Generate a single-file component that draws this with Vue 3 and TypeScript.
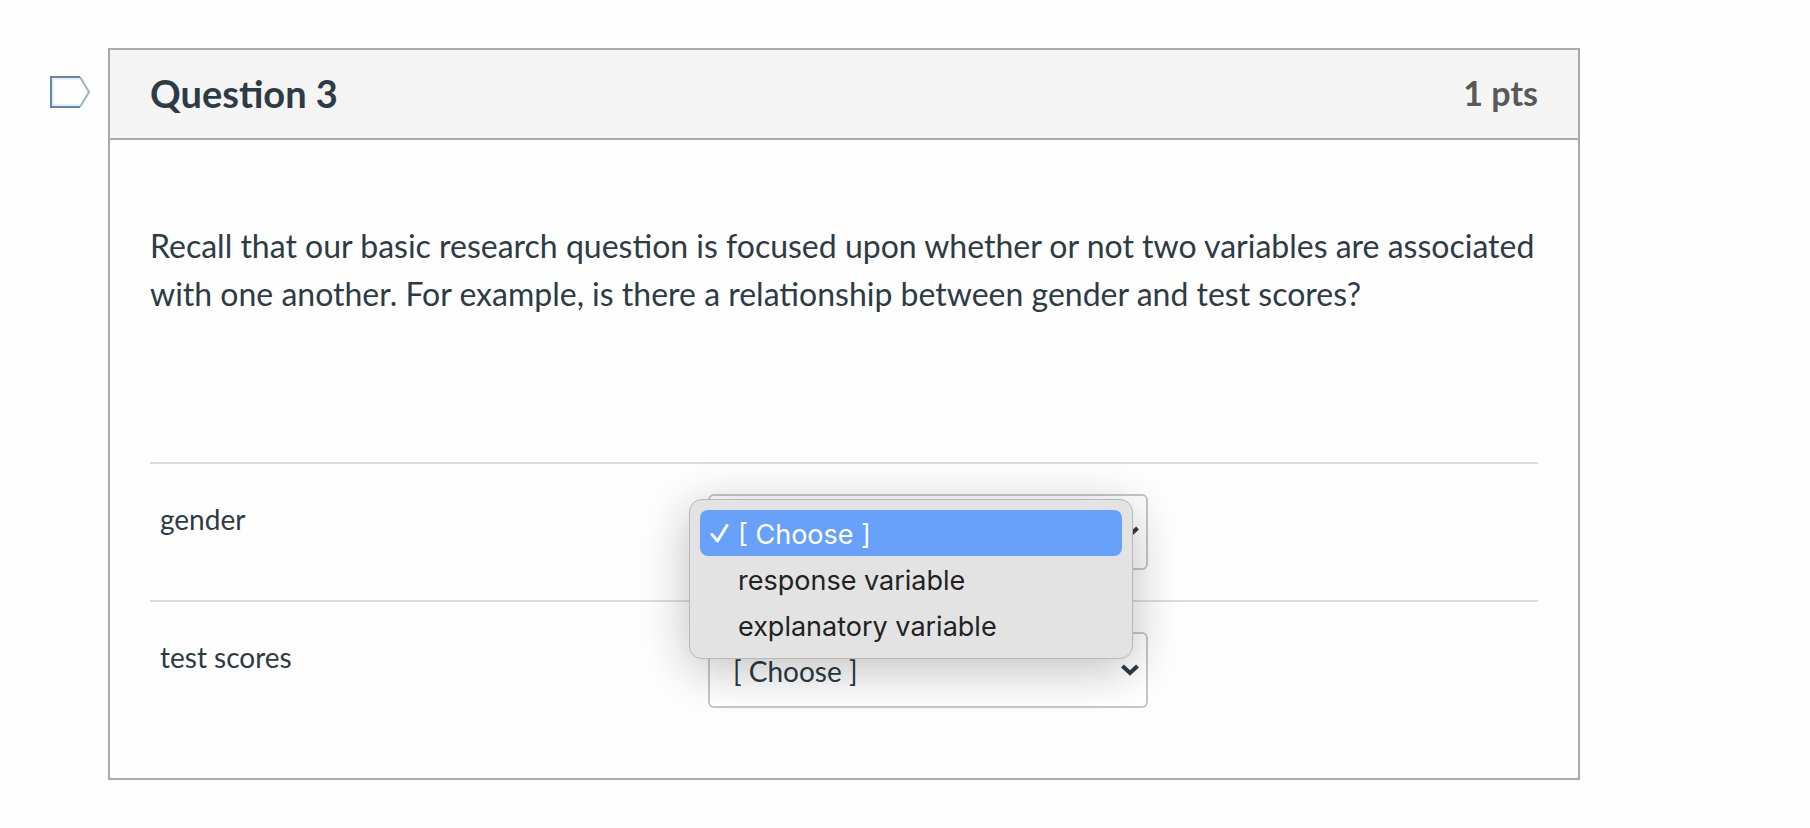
<script setup lang="ts">
import { ref } from 'vue'

interface Row {
  id: string
  label: string
}

const rows: Row[] = [
  { id: 'gender', label: 'gender' },
  { id: 'test-scores', label: 'test scores' },
]
const choices: string[] = ['[ Choose ]', 'response variable', 'explanatory variable']

const answers = ref<Record<string, string>>({ gender: choices[0], 'test-scores': choices[0] })
const openRow = ref<string | null>('gender')
const flagged = ref(false)

function pick(id: string, choice: string): void {
  answers.value[id] = choice
  openRow.value = null
}
</script>

<template>
  <main class="page">
    <button
      class="flag"
      type="button"
      aria-label="Flag question"
      :aria-pressed="flagged"
      @click="flagged = !flagged"
    >
      <svg width="40" height="32" viewBox="0 0 40 32" fill="none">
        <path d="M30 1 L39 16 L30 31" stroke="#9db3c4" stroke-width="2" />
        <path d="M30 1 H1 V31 H30" stroke="#6488a3" stroke-width="2" />
        <path d="M30 3 H3 V29 H30" stroke="#d3dee6" stroke-width="1" />
      </svg>
    </button>

    <section class="card">
      <header class="head">
        <h2 class="title">Question 3</h2>
        <span class="points">1 pts</span>
      </header>

      <div class="body">
        <p class="prompt">
          Recall that our basic research question is focused upon whether or not two variables are
          associated with one another. For example, is there a relationship between gender and test
          scores?
        </p>

        <div v-for="row in rows" :key="row.id" class="row">
          <label class="label" :for="row.id">{{ row.label }}</label>
          <div class="field">
            <select :id="row.id" v-model="answers[row.id]" class="select">
              <option v-for="choice in choices" :key="choice" :value="choice">{{ choice }}</option>
            </select>
            <svg class="chevron" width="18" height="12" viewBox="0 0 18 12" fill="none">
              <path d="M1.500 2 L9 9 L16.500 2" stroke="#2d3b45" stroke-width="4" />
            </svg>

            <div v-if="openRow === row.id" class="menu" role="listbox" :aria-label="row.label">
              <button
                v-for="choice in choices"
                :key="choice"
                type="button"
                role="option"
                class="option"
                :class="{ active: answers[row.id] === choice }"
                :aria-selected="answers[row.id] === choice"
                @click="pick(row.id, choice)"
              >
                <span class="mark">
                  <svg
                    v-if="answers[row.id] === choice"
                    width="20"
                    height="20"
                    viewBox="0 0 20 20"
                    fill="none"
                  >
                    <path
                      d="M3 10.500 L8.500 17 L18 1.500"
                      stroke="#ffffff"
                      stroke-width="3"
                      stroke-linecap="round"
                      stroke-linejoin="round"
                    />
                  </svg>
                </span>
                {{ choice }}
              </button>
            </div>
          </div>
        </div>
      </div>
    </section>
  </main>
</template>

<style>
body {
  margin: 0;
  background: #fefefe;
}
</style>

<style scoped>
.page {
  display: flex;
  align-items: flex-start;
  gap: 18px;
  padding: 48px 230px 48px 50px;
  font-family: Lato, 'Liberation Sans', sans-serif;
  color: #2d3b45;
}

.flag {
  flex: none;
  margin: 28px 0 0;
  padding: 0;
  border: 0;
  background: none;
  cursor: pointer;
}

.flag svg {
  display: block;
}

.card {
  flex: 1;
  min-width: 0;
  border: 2px solid #aaaaaa;
}

.head {
  display: flex;
  align-items: center;
  justify-content: space-between;
  padding: 19px 40px 21px;
  border-bottom: 2px solid #aaaaaa;
  background: #f5f5f5;
}

.title {
  margin: 0;
  font-size: 38px;
  line-height: 48px;
  font-weight: 700;
}

.points {
  font-size: 34px;
  line-height: 48px;
  font-weight: 700;
  color: #595959;
}

.body {
  padding: 82px 40px 40px;
}

.prompt {
  margin: 0 0 144px;
  font-size: 32px;
  line-height: 48px;
}

.row {
  display: grid;
  grid-template-columns: 279fr 415fr;
  padding: 30px 0;
  border-top: 2px solid #dddddd;
}

.label {
  padding: 5px 10px;
  font-size: 28px;
  line-height: 40px;
}

.field {
  position: relative;
  width: 440px;
}

.select {
  display: block;
  box-sizing: border-box;
  width: 100%;
  height: 76px;
  padding: 2px 48px 0 23px;
  border: 2px solid #c7c7c7;
  border-radius: 6px;
  background: #ffffff;
  color: #2d3b45;
  font: 28px Lato, 'Liberation Sans', sans-serif;
  appearance: none;
}

.chevron {
  position: absolute;
  top: 32px;
  right: 9px;
  pointer-events: none;
}

.menu {
  position: absolute;
  z-index: 1;
  top: 5px;
  left: -19px;
  box-sizing: border-box;
  width: 444px;
  padding: 10px;
  border: 1px solid #b8b8b8;
  border-radius: 13px;
  background: #e3e3e3;
  box-shadow: 0 10px 50px rgba(0, 0, 0, 0.26);
}

.option {
  display: flex;
  align-items: center;
  width: 100%;
  height: 46px;
  padding: 2px 9px 0;
  border: 0;
  border-radius: 8px;
  background: none;
  color: #222222;
  font: 27px Inter, 'Liberation Sans', sans-serif;
  text-align: left;
}

.option.active {
  background: #68a1fa;
  color: #ffffff;
}

.mark {
  flex: none;
  width: 29px;
  height: 20px;
}

.mark svg {
  display: block;
}
</style>
